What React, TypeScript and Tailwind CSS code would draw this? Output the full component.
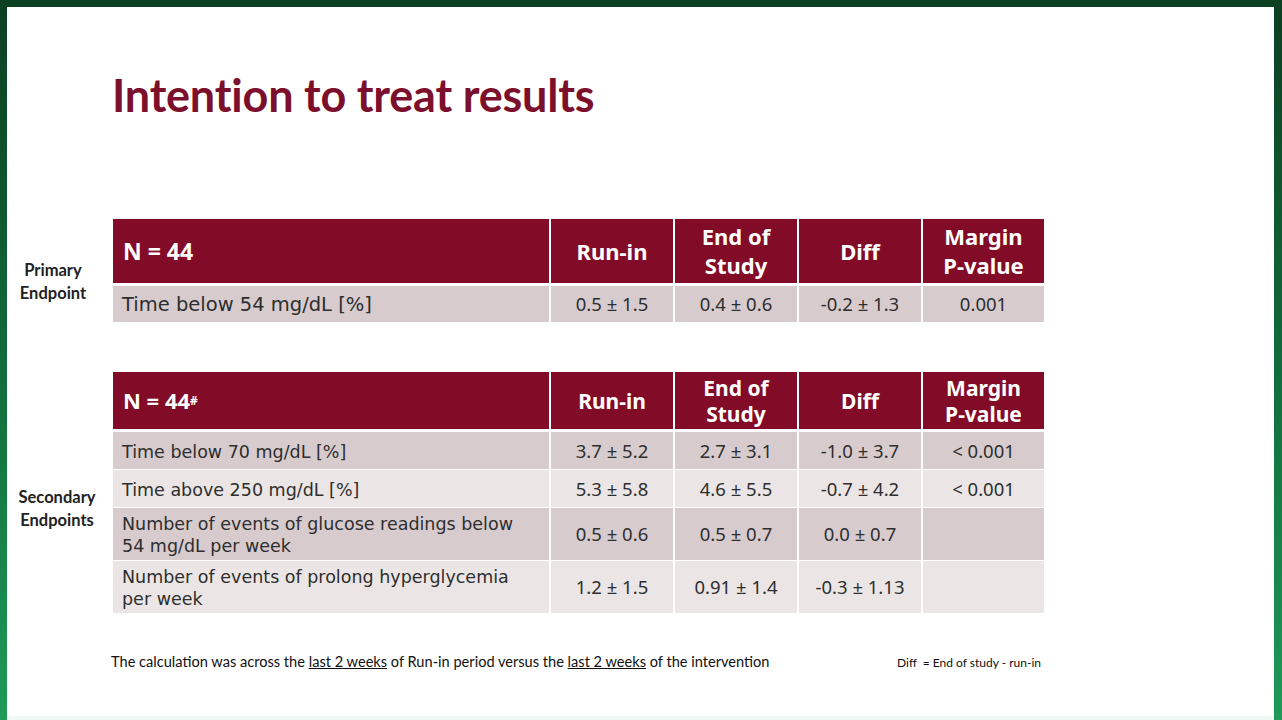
import React from 'react';

type Row = { label: React.ReactNode; run: string; end: string; diff: string; p: string; tall?: boolean; shade: 'dark' | 'light' };

const secondary: Row[] = [
  { label: 'Time below 70 mg/dL [%]', run: '3.7 ± 5.2', end: '2.7 ± 3.1', diff: '-1.0 ± 3.7', p: '< 0.001', shade: 'dark' },
  { label: 'Time above 250 mg/dL [%]', run: '5.3 ± 5.8', end: '4.6 ± 5.5', diff: '-0.7 ± 4.2', p: '< 0.001', shade: 'light' },
  {
    label: (
      <>
        Number of events of glucose readings below
        <br />
        54 mg/dL per week
      </>
    ),
    run: '0.5 ± 0.6',
    end: '0.5 ± 0.7',
    diff: '0.0 ± 0.7',
    p: '',
    tall: true,
    shade: 'dark',
  },
  {
    label: (
      <>
        Number of events of prolong hyperglycemia
        <br />
        per week
      </>
    ),
    run: '1.2 ± 1.5',
    end: '0.91 ± 1.4',
    diff: '-0.3 ± 1.13',
    p: '',
    tall: true,
    shade: 'light',
  },
];

const Header: React.FC<{ n: React.ReactNode; h: string; big?: boolean }> = ({ n, h, big }) => (
  <>
    <div className={`bg-[#820b27] ${h} flex items-center pl-[10px] text-white font-bold ${big ? 'text-[23px]' : 'text-[22px]'}`}>{n}</div>
    {['Run-in', 'End of|Study', 'Diff', 'Margin|P-value'].map((t) => (
      <div
        key={t}
        className={`bg-[#820b27] ${h} flex items-center justify-center text-center text-white font-bold ${
          big ? 'text-[22px] leading-[29px]' : 'text-[21px] leading-[26px]'
        }`}
      >
        <span>
          {t.split('|').map((s, i) => (
            <span key={i} className="block">
              {s}
            </span>
          ))}
        </span>
      </div>
    ))}
  </>
);

const DataRow: React.FC<{ row: Row; h: string; big?: boolean }> = ({ row, h, big }) => {
  const bg = row.shade === 'dark' ? 'bg-[#d7cbcd]' : 'bg-[#ebe6e5]';
  return (
    <>
      <div
        className={`${bg} ${h} flex items-center pl-[9px] pt-[2px] ${big ? 'text-[19.5px]' : 'text-[17.5px]'} leading-[22px] text-[#2e2e2e]`}
        style={{ fontFamily: '"DejaVu Sans", sans-serif' }}
      >
        <span>{row.label}</span>
      </div>
      {[row.run, row.end, row.diff, row.p].map((v, i) => (
        <div key={i} className={`${bg} ${h} flex items-center justify-center text-[18.5px] text-[#2e2e2e]`}>
          {v}
        </div>
      ))}
    </>
  );
};

export default function App() {
  return (
    <div className="w-[1282px] h-[720px] overflow-hidden bg-gradient-to-b from-[#0b3f22] via-[#116b3c] to-[#1f9a58] pt-[7px] pl-[7px] pr-[8px]">
      <div
        className="w-full h-full bg-white border-b-4 border-[#eef8f4] relative flex flex-col"
        style={{ fontFamily: '"Noto Sans", sans-serif' }}
      >
        <h1
          className="ml-[105px] mt-[63px] text-[45px] leading-[50px] font-bold text-[#7c0f2c] tracking-[-0.2px]"
          style={{ fontFamily: 'Lato, sans-serif' }}
        >
          Intention to treat results
        </h1>

        {/* primary endpoint */}
        <div className="mt-[99px] flex">
          <div
            className="w-[92px] mr-[14px] pt-[22px] flex items-center justify-center text-center text-[16.5px] leading-[23px] font-bold text-[#222]"
            style={{ fontFamily: 'Lato, sans-serif' }}
          >
            Primary
            <br />
            Endpoint
          </div>
          <div className="grid grid-cols-[436px_122px_122px_122px_121px] gap-x-[2px] gap-y-[3px]">
            <Header n="N = 44" h="h-[64px]" big />
            <DataRow
              big
              row={{ label: 'Time below 54 mg/dL [%]', run: '0.5 ± 1.5', end: '0.4 ± 0.6', diff: '-0.2 ± 1.3', p: '0.001', shade: 'dark' }}
              h="h-[36px]"
            />
          </div>
        </div>

        {/* secondary endpoints */}
        <div className="mt-[50px] flex">
          <div
            className="w-[100px] mr-[6px] pt-[32px] flex items-center justify-center text-center text-[16.5px] leading-[23px] font-bold text-[#222]"
            style={{ fontFamily: 'Lato, sans-serif' }}
          >
            Secondary
            <br />
            Endpoints
          </div>
          <div className="grid grid-cols-[436px_122px_122px_122px_121px] gap-x-[2px] gap-y-[1px]">
            <Header
              n={
                <span>
                  N = 44<sup className="text-[12px] relative -top-[4px]">#</sup>
                </span>
              }
              h="h-[57px] mb-[2px]"
            />
            {secondary.map((r, i) => (
              <DataRow key={i} row={r} h={r.tall ? 'h-[52px]' : 'h-[37px]'} />
            ))}
          </div>
        </div>

        <div className="mt-[38px] flex items-baseline text-[#111]" style={{ fontFamily: 'Lato, sans-serif' }}>
          <p className="ml-[104px] text-[14.6px]">
            The calculation was across the <span className="underline">last 2 weeks</span> of Run-in period versus the{' '}
            <span className="underline">last 2 weeks</span> of the intervention
          </p>
          <p className="ml-auto mr-[233px] text-[12px]">Diff&nbsp; = End of study - run-in</p>
        </div>
      </div>
    </div>
  );
}
